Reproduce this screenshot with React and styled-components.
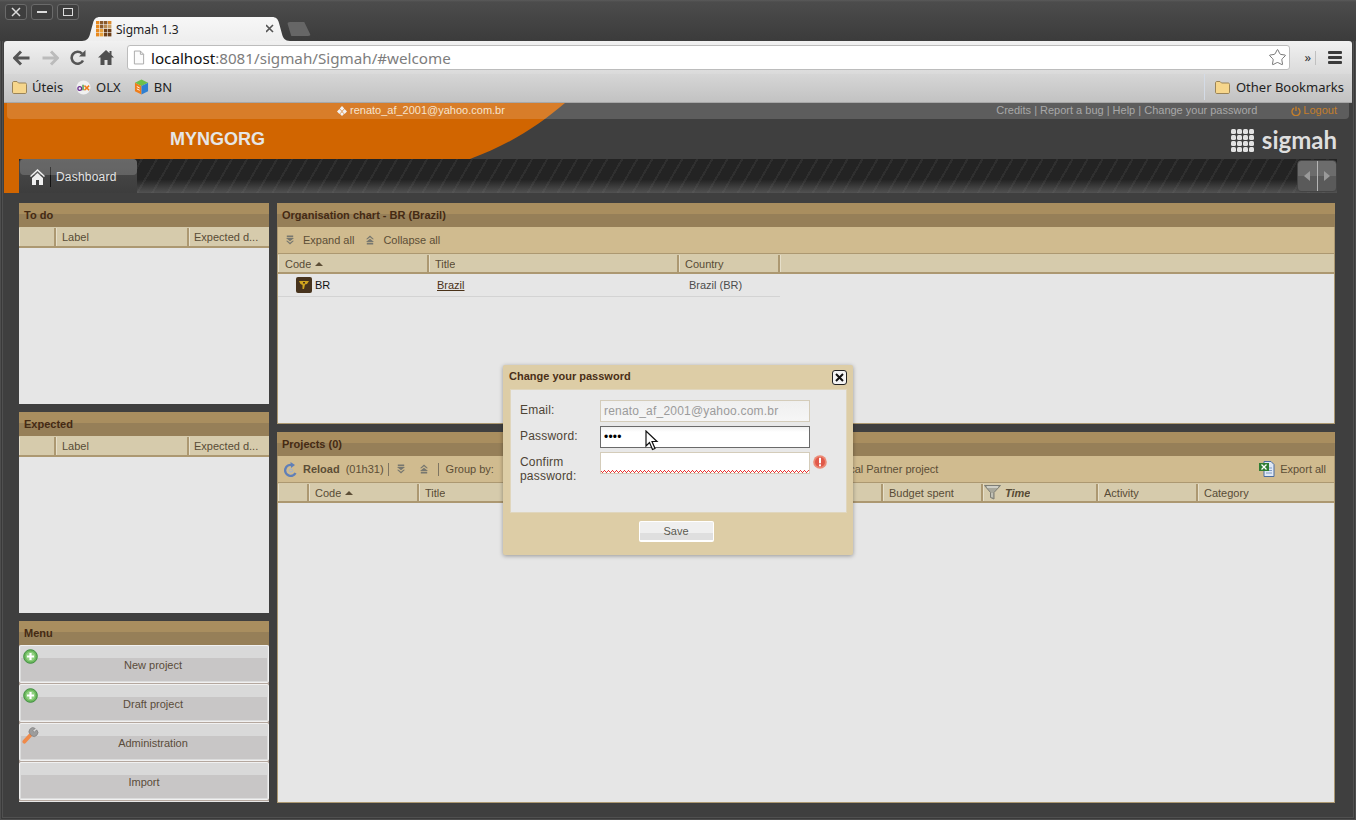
import React from 'react';
import styled, { createGlobalStyle } from 'styled-components';
import { Star } from 'lucide-react';

const GlobalStyle = createGlobalStyle`
  html, body {
    margin: 0;
    padding: 0;
    background: #3f3f3f;
  }
  * {
    box-sizing: border-box;
  }
`;

const Frame = styled.div`
  position: relative;
  width: 1356px;
  height: 820px;
  overflow: hidden;
  padding: 0 4px 4px;
  background: #3f3f3f;
  box-shadow: inset 0 0 0 1px #4e4e4e, inset 0 0 0 2px #3a3a3a, inset 0 0 0 3px #505050;
  font-family: "Liberation Sans", Arial, sans-serif;
  font-size: 11px;
`;

const TitleBar = styled.div`
  position: relative;
  height: 41px;
  margin: 0 -4px;
  padding: 4px 0 0 5px;
  display: flex;
  align-items: flex-start;
  gap: 4px;
  background: linear-gradient(#5a5a5a 0, #4c4c4c 2px, #3b3b3b 100%);
`;

const WinButton = styled.div`
  width: 22px;
  height: 16px;
  display: flex;
  align-items: center;
  justify-content: center;
  border: 1px solid #6a6a6a;
  border-radius: 3px;
  background: #3e3e3e;
`;

const Tab = styled.div`
  position: absolute;
  left: 82px;
  top: 17px;
  width: 208px;
  height: 24px;
  padding: 0 4px 0 14px;
  display: flex;
  align-items: center;
  gap: 4px;
  clip-path: path('M0 24 C5 24 7 21 8 17 L11 6 C12 2 14 0 18 0 L190 0 C194 0 196 2 197 6 L200 17 C201 21 203 24 208 24 Z');
  background: linear-gradient(#f7f7f7, #eeeeee);
  font-family: "Noto Sans", sans-serif;
  font-size: 12px;
  color: #222;
`;

const TabLabel = styled.span`
  flex: 1;
`;

const NewTab = styled.div`
  position: absolute;
  left: 287px;
  top: 22px;
  width: 24px;
  height: 14px;
  background: #666;
  clip-path: polygon(0 0, 72% 0, 100% 100%, 18% 100%);
  border-radius: 3px;
`;

const Toolbar = styled.div`
  height: 33px;
  padding: 0 7px 0 4px;
  display: flex;
  align-items: center;
  background: linear-gradient(#f1f1f1, #dadada);
  border-radius: 3px 3px 0 0;
`;

const NavIcon = styled.div`
  width: 28px;
  height: 28px;
  display: flex;
  align-items: center;
  justify-content: center;
  flex: none;
`;

const Omnibox = styled.div`
  width: 1163px;
  height: 25px;
  flex: none;
  margin-left: 7px;
  padding: 0 2px 0 5px;
  display: flex;
  align-items: center;
  gap: 6px;
  background: #fff;
  border: 1px solid #bcbcbc;
  border-radius: 3px;
  font-family: "Noto Sans", sans-serif;
  font-size: 15.2px;
  color: #7d7d7d;
`;

const Url = styled.div`
  flex: 1;
  white-space: nowrap;
  b {
    font-weight: 400;
    color: #111;
  }
`;

const Chevrons = styled.div`
  width: 26px;
  flex: none;
  padding-right: 4px;
  height: 14px;
  line-height: 12px;
  text-align: right;
  border-right: 1px solid #c0c0c0;
  color: #333;
  font-family: "Noto Sans", sans-serif;
  font-size: 13px;
`;

const MenuBars = styled.div`
  margin-left: 12px;
  width: 14px;
  height: 13px;
  flex: none;
  display: flex;
  flex-direction: column;
  justify-content: space-between;
  span {
    display: block;
    height: 3px;
    background: #3a3a3a;
    border-radius: 1px;
  }
`;

const BookmarksBar = styled.div`
  height: 29px;
  padding: 0 8px 2px;
  display: flex;
  align-items: center;
  background: linear-gradient(#d6d6d6, #c2c2c2);
  border-bottom: 1px solid #a8a8a8;
  font-family: "Noto Sans", sans-serif;
  font-size: 13px;
  color: #222;
`;

const Bookmark = styled.div`
  margin-right: 13px;
  display: flex;
  align-items: center;
  gap: 5px;
  white-space: nowrap;
`;

const OtherBookmarks = styled(Bookmark)`
  height: 100%;
  margin: 0 0 0 auto;
  padding-left: 10px;
  gap: 6px;
  border-left: 1px solid #d4dbe6;
`;

const Page = styled.div`
  position: relative;
  height: 714px;
  background: #3f3f3f;
`;

const HeaderShape = styled.svg`
  position: absolute;
  left: 0;
  top: 0;
  width: 600px;
  height: 90px;
`;

const TopBar = styled.div`
  position: relative;
  height: 16px;
  margin: 0 3px;
  padding: 0 12px 1px 330px;
  display: flex;
  align-items: center;
  background: rgba(255, 255, 255, 0.16);
  border-radius: 0 0 4px 4px;
  color: #a9a9a9;
  line-height: 15px;
`;

const UserEmail = styled.span`
  display: inline-flex;
  align-items: center;
  gap: 3px;
  color: #f6e4cf;
`;

const TopLinks = styled.span`
  margin-left: auto;
  color: #a8a8a8;
`;

const Logout = styled.span`
  margin-left: 34px;
  display: inline-flex;
  align-items: center;
  gap: 2px;
  color: #c47f2c;
`;

const BrandRow = styled.div`
  position: relative;
  height: 40px;
  padding: 0 15px 0 166px;
  display: flex;
  align-items: center;
  justify-content: space-between;
`;

const OrgName = styled.div`
  font-size: 18px;
  font-weight: 700;
  color: #e6e6e6;
`;

const Logo = styled.div`
  display: flex;
  align-items: center;
  gap: 8px;
  padding-top: 2px;
  color: #dedede;
  font-family: "Lato", sans-serif;
  font-size: 24px;
  font-weight: 700;
  line-height: 24px;
`;

const TabStrip = styled.div`
  position: relative;
  height: 34px;
  margin: 0 15px;
  display: flex;
  justify-content: space-between;
  background:
    linear-gradient(transparent 60%, rgba(120, 120, 120, 0.55) 100%),
    repeating-linear-gradient(-60deg, #232323 0 11px, #2f2f2f 11px 13px);
`;

const DashTab = styled.div`
  position: relative;
  width: 118px;
  padding: 1px 0 0 11px;
  display: flex;
  align-items: center;
  background: linear-gradient(#4a4a4a, #3d3d3d);
  border-radius: 4px 4px 0 0;
  color: #e2e2e2;
  font-size: 12px;
  letter-spacing: 0.2px;
  &::before {
    content: '';
    position: absolute;
    left: 1px;
    right: 0;
    top: 0;
    height: 16px;
    background: rgba(255, 255, 255, 0.17);
    border-radius: 4px;
  }
`;

const DashDivider = styled.span`
  width: 1px;
  height: 20px;
  margin: 0 5px 0 5px;
  background: #111;
`;

const StripNav = styled.div`
  width: 40px;
  margin: 1px 0;
  display: flex;
  border-radius: 4px;
  overflow: hidden;
  background: linear-gradient(#6c6c6c 50%, #5a5a5a 50%);
  border: 1px solid #444;
`;

const StripArrow = styled.div`
  flex: 1;
  display: flex;
  align-items: center;
  justify-content: center;
  & + & {
    border-left: 1px solid #b5b5b5;
  }
  i {
    width: 0;
    height: 0;
    border-top: 5px solid transparent;
    border-bottom: 5px solid transparent;
    ${(p) => (p.$right ? 'border-left: 6px solid #9a9a9a;' : 'border-right: 6px solid #9a9a9a;')}
  }
`;

const Dashboard = styled.div`
  position: relative;
  padding: 10px 17px 0 15px;
  display: grid;
  grid-template-columns: 250px 1058px;
  column-gap: 8px;
`;

const Column = styled.div`
  display: flex;
  flex-direction: column;
  gap: 8px;
`;

const Panel = styled.div`
  height: ${(p) => p.$h}px;
  display: flex;
  flex-direction: column;
  background: #e6e6e6;
  ${(p) => p.$framed && 'box-shadow: inset 1px 0 0 #ac9871, inset -1px 0 0 #ac9871, inset 0 -1px 0 #ac9871;'}
`;

const PanelTitle = styled.div`
  height: 24px;
  flex: none;
  padding: 0 5px;
  display: flex;
  align-items: center;
  background: linear-gradient(#a98e5f 46%, #967f58 46%);
  color: #452a13;
  font-weight: 700;
`;

const PanelBar = styled.div`
  height: 26px;
  flex: none;
  margin: 0 1px;
  padding: 0 8px 0 6px;
  display: flex;
  align-items: center;
  background: #d0bb8f;
  color: #5c4e36;
  white-space: nowrap;
`;

const HeadRow = styled.div`
  height: ${(p) => p.$h || 21}px;
  flex: none;
  margin: 0 ${(p) => (p.$inset ? 1 : 0)}px;
  padding-top: ${(p) => (p.$inset ? 1 : 0)}px;
  display: flex;
  background: #d6cbac;
  border-top: 1px solid ${(p) => (p.$inset ? '#ac9871' : '#d6cbac')};
  border-bottom: 2px solid #ac9871;
`;

const HeadCell = styled.div`
  width: ${(p) => p.$w}px;
  flex: ${(p) => (p.$w ? 'none' : '1')};
  padding: 0 ${(p) => p.$pad ?? 6}px;
  display: flex;
  align-items: center;
  gap: 4px;
  min-width: 0;
  border-right: 2px solid #ac9871;
  box-shadow: inset 1px 0 0 #e6dfca;
  color: #584b36;
  font-style: ${(p) => (p.$italic ? 'italic' : 'normal')};
  font-weight: ${(p) => (p.$italic ? 700 : 400)};
  span {
    overflow: hidden;
    text-overflow: ellipsis;
    white-space: nowrap;
  }
  &:last-child {
    border-right: 0;
  }
`;

const SortUp = styled.i`
  width: 0;
  height: 0;
  border-left: 4px solid transparent;
  border-right: 4px solid transparent;
  border-bottom: 4px solid #5c4e36;
`;

const DataRow = styled.div`
  width: 502px;
  height: 23px;
  margin-left: 1px;
  display: flex;
  align-items: center;
  flex: none;
  border-bottom: 1px solid #d3d3d3;
`;

const DataCell = styled.div`
  width: ${(p) => p.$w}px;
  padding-left: ${(p) => p.$pad}px;
  display: flex;
  align-items: center;
  gap: 3px;
  color: ${(p) => p.$color || '#4d4d4d'};
  a {
    color: #4a3218;
    text-decoration: underline;
  }
`;

const BarGap = styled.span`
  display: inline-flex;
  align-items: center;
  margin-left: ${(p) => (p.$auto ? 'auto' : `${p.$l || 0}px`)};
  gap: ${(p) => p.$g || 0}px;
`;

const BarSep = styled.span`
  width: 1px;
  height: 13px;
  margin-left: ${(p) => p.$l}px;
  background: #7f7561;
`;

const MenuButton = styled.div`
  height: 38px;
  margin-bottom: 1px;
  padding-left: ${(p) => (p.$plain ? 0 : 18)}px;
  padding-top: 1px;
  position: relative;
  display: flex;
  align-items: center;
  justify-content: center;
  border: 1px solid #f1f1f1;
  border-radius: 2px;
  background: linear-gradient(#d9d9d9 32%, #c8c6c6 32%);
  box-shadow: inset 0 -1px 0 #dcdcdc, inset 1px 0 0 #dcdcdc, inset -1px 0 0 #dcdcdc;
  color: #5a4c3a;
`;

const MenuIcon = styled.span`
  position: absolute;
  left: ${(p) => p.$l ?? 3}px;
  top: 3px;
  display: flex;
`;

const MenuList = styled.div`
  display: flex;
  flex-direction: column;
  background: #b4a79e;
`;

const Dialog = styled.div`
  position: absolute;
  left: 503px;
  top: 365px;
  width: 350px;
  height: 190px;
  padding: 4px 6px 0 7px;
  background: #ddcda6;
  border-radius: 2px;
  box-shadow: 0 1px 4px rgba(0, 0, 0, 0.35);
`;

const DialogHead = styled.div`
  height: 20px;
  margin-left: -1px;
  display: flex;
  align-items: flex-start;
  justify-content: space-between;
  line-height: 14px;
  color: #4a2f17;
  font-weight: 700;
`;

const CloseBox = styled.div`
  width: 15px;
  height: 15px;
  margin-top: 1px;
  display: flex;
  align-items: center;
  justify-content: center;
  background: #f4f4f4;
  border: 1px solid #222;
  border-radius: 3px;
`;

const DialogBody = styled.div`
  height: 124px;
  padding: 10px 10px 0 9px;
  display: grid;
  grid-template-columns: 80px 210px 20px;
  grid-auto-rows: min-content;
  row-gap: 4px;
  background: #e8e8e8;
  border: 1px solid #e0d6bd;
`;

const FieldLabel = styled.label`
  padding-top: 3px;
  line-height: 14px;
  color: #4e4435;
  font-size: 12px;
  letter-spacing: 0.2px;
`;

const Field = styled.input`
  width: 210px;
  height: 22px;
  padding: 0 3px;
  font-family: "Liberation Sans", Arial, sans-serif;
  font-size: 12px;
  letter-spacing: 0.2px;
  outline: 0;
  border-radius: 0;
  border: 1px solid ${(p) => (p.$focused ? '#6a6a6a' : '#d4ccba')};
  color: ${(p) => (p.$muted ? '#9b9b9b' : '#000')};
  background: ${(p) => (p.$muted ? 'linear-gradient(#efefef, #f6f6f6)' : 'linear-gradient(#f0f0f0, #fff 25%)')};
  ${(p) => p.$invalid && `
    background:
      linear-gradient(135deg, transparent 50%, #e8312f 50%, #e8312f 70%, transparent 70%) 0 100% / 4px 3px repeat-x,
      linear-gradient(45deg, transparent 50%, #e8312f 50%, #e8312f 70%, transparent 70%) 2px 100% / 4px 3px repeat-x,
      #fff;
  `}
`;

const ErrorDot = styled.div`
  margin: 3px 0 0 3px;
`;

const DialogFoot = styled.div`
  height: 42px;
  padding: 8px 5px 0 0;
  display: flex;
  align-items: flex-start;
  justify-content: center;
`;

const SaveButton = styled.div`
  width: 75px;
  height: 21px;
  display: flex;
  align-items: center;
  justify-content: center;
  border: 1px solid #fff;
  border-bottom-width: 2px;
  border-radius: 2px;
  background: linear-gradient(#efefef 62%, #dfdfdf 62%);
  color: #5a5a50;
`;

const Pointer = styled.svg`
  position: absolute;
  left: 645px;
  top: 430px;
`;

const Back = ({ color }) => (
  <svg width="18" height="16" viewBox="0 0 18 16">
    <path d="M8 1.5 1.5 8 8 14.5M2 8h14.5" fill="none" stroke={color} strokeWidth="3" />
  </svg>
);

const Forward = ({ color }) => (
  <svg width="18" height="16" viewBox="0 0 18 16">
    <path d="M10 1.5 16.5 8 10 14.5M16 8H1.5" fill="none" stroke={color} strokeWidth="3" />
  </svg>
);

const Reload = () => (
  <svg width="16" height="16" viewBox="0 0 16 16">
    <path d="M13 10.5A6 6 0 1 1 12 3.6" fill="none" stroke="#555" strokeWidth="2.6" />
    <path d="M9 6.5h6.5V0z" fill="#555" />
  </svg>
);

const Home = () => (
  <svg width="16" height="15" viewBox="0 0 16 15">
    <path d="M8 0 0 7.5h2.5V15h4v-5h3v5h4V7.5H16l-2.5-2.4V1h-2v2.2z" fill="#4f4f4f" />
  </svg>
);

const PageIcon = () => (
  <svg width="12" height="15" viewBox="0 0 13 15">
    <path d="M1.5.5h6.5l3.5 3.5v10.5h-10z" fill="#fbfbfb" stroke="#a5a5a5" />
    <path d="M8 .5V4h3.5" fill="none" stroke="#a5a5a5" />
  </svg>
);

const Folder = () => (
  <svg width="15" height="13" viewBox="0 0 15 13">
    <path d="M.5 2c0-1 .5-1.500 1.500-1.500h3l1.500 1.500H13c1 0 1.500.5 1.500 1.500V11c0 1-.5 1.500-1.500 1.500H2C1 12.500.5 12 .5 11z" fill="#f6d68c" stroke="#9a8458" />
  </svg>
);

const SIGMAH_DOTS = ['#e8891d', '#8a5a2c', '#8a5a2c', '#d98b2e', '#e8891d', '#8a5a2c', '#b98a50', '#c9a26a', '#e8891d', '#e8a13d', '#6e3f18', '#6e3f18', '#e8891d', '#e8a13d', '#6e3f18', '#6e3f18'];

const Favicon = () => (
  <svg width="16" height="16" viewBox="0 0 16 16">
    {SIGMAH_DOTS.map((c, i) => (
      <rect key={i} x={(i % 4) * 4} y={Math.floor(i / 4) * 4} width="3.4" height="3.4" fill={c} />
    ))}
  </svg>
);

const LogoDots = () => (
  <svg width="23" height="23" viewBox="0 0 23 23">
    {Array.from({ length: 16 }).map((_, i) => (
      <rect key={i} x={(i % 4) * 6} y={Math.floor(i / 4) * 6} width="5" height="5" rx="1.500" fill="#e2e2e2" />
    ))}
  </svg>
);

const OlxIcon = () => (
  <svg width="15" height="15" viewBox="0 0 16 16">
    <circle cx="8" cy="8" r="7.500" fill="#f1f1f1" />
    <circle cx="4" cy="9" r="2" fill="none" stroke="#6b2f91" strokeWidth="1.400" />
    <path d="M7.500 5v6" stroke="#3b8f3a" strokeWidth="1.400" />
    <path d="m9 6 5 5m0-5-5 5" stroke="#ef7d1a" strokeWidth="1.600" />
  </svg>
);

const CubeIcon = () => (
  <svg width="15" height="16" viewBox="0 0 16 16">
    <path d="M8 0 15 3.500 8 7 1 3.500z" fill="#6cc04a" />
    <path d="M1 3.500 8 7v9L1 12.500z" fill="#ef7d1a" />
    <path d="M15 3.500 8 7v9l7-3.500z" fill="#2f7fd1" />
    <path d="M3 7.500 6 9M3 10l3 1.500" stroke="#fff" strokeWidth="1" />
  </svg>
);

const HouseWhite = () => (
  <svg width="15" height="16" viewBox="0 0 15 16">
    <path d="M7.500 0 0 7l1 1 6.500-6 6.500 6 1-1z" fill="#efefef" />
    <path d="M2 9l5.500-5L13 9v7H9v-5H6v5H2z" fill="#efefef" />
  </svg>
);

const Expand = () => (
  <svg width="8" height="10" viewBox="0 0 10 11">
    <path d="M1 0h8v2H1zM0 3h10L5 7zM0 6.500 5 11l5-4.500H8L5 9 2 6.500z" fill="#77776f" />
  </svg>
);

const Collapse = () => (
  <svg width="8" height="10" viewBox="0 0 10 11">
    <path d="M1 11h8V9H1zM0 8h10L5 4zM0 4.500 5 0l5 4.500H8L5 2 2 4.500z" fill="#77776f" />
  </svg>
);

const PlusBadge = () => (
  <svg width="15" height="15" viewBox="0 0 15 15">
    <circle cx="7.500" cy="7.500" r="6.800" fill="#6cb85c" stroke="#3f8f3f" />
    <circle cx="7.500" cy="7.500" r="4.800" fill="#8fd080" />
    <path d="M7.500 4v7M4 7.500h7" stroke="#fff" strokeWidth="2.200" />
  </svg>
);

const Wrench = () => (
  <svg width="17" height="17" viewBox="0 0 18 18">
    <path d="M2.500 15.500 9 8.500" stroke="#ef8a4a" strokeWidth="4" strokeLinecap="round" />
    <path d="M9 8a4 4 0 0 1 5-6.500L11.500 4l1.500 1.500L15.500 3A4 4 0 0 1 10 9z" fill="#9c9c9c" stroke="#777" strokeWidth=".6" />
  </svg>
);

const BrandBadge = () => (
  <svg width="16" height="16" viewBox="0 0 16 16">
    <rect width="16" height="16" rx="2" fill="#47331d" />
    <path d="M3 4h10L11 7 9 7.500 8 12H6.500L6.500 8 4.500 7z" fill="#d0a41e" />
    <rect x="7" y="5" width="2" height="1.500" fill="#47331d" />
  </svg>
);

const ReloadBlue = () => (
  <svg width="14" height="15" viewBox="0 0 14 15">
    <path d="M11.500 11A5.500 5.500 0 1 1 8 3" fill="none" stroke="#5f7fb8" strokeWidth="2.400" />
    <path d="M6.500 0 11 3 7 6z" fill="#5f7fb8" />
    <circle cx="7" cy="8.500" r="1.600" fill="none" stroke="#9db2d6" />
  </svg>
);

const Excel = () => (
  <svg width="16" height="16" viewBox="0 0 16 16">
    <path d="M5 .5h7l3 3v12H5z" fill="#dfe8f4" stroke="#4a6da0" />
    <path d="M7 7h6M7 9.500h6M7 12h6" stroke="#7f9cc6" />
    <rect x="0" y="2" width="10" height="8" fill="#2f7d32" />
    <path d="m2.500 3.500 5 5m0-5-5 5" stroke="#fff" strokeWidth="1.300" />
  </svg>
);

const Funnel = () => (
  <svg width="17" height="15" viewBox="0 0 17 15">
    <path d="M.5.500h16L10 7.500V14l-3.500-1.500v-5z" fill="#a9a89c" stroke="#7d7d75" />
    <path d="M3 2h11" stroke="#f5f5f0" />
    <path d="M8 8v4" stroke="#d8d8cf" />
  </svg>
);

const ErrorIcon = () => (
  <svg width="14" height="14" viewBox="0 0 14 14">
    <circle cx="7" cy="7" r="6.800" fill="#ec8a75" />
    <circle cx="7" cy="7" r="5" fill="#e0594a" />
    <rect x="6" y="2.800" width="2" height="5.500" fill="#fff" />
    <rect x="6" y="9.300" width="2" height="2" fill="#fff" />
  </svg>
);

const PowerIcon = () => (
  <svg width="10" height="10" viewBox="0 0 10 10">
    <path d="M3 2.200a4 4 0 1 0 4 0M5 .5v4.500" fill="none" stroke="#c47f2c" strokeWidth="1.400" />
  </svg>
);

const Diamonds = () => (
  <svg width="10" height="10" viewBox="0 0 10 10">
    <path d="M5 0l2.300 2.500L5 5 2.700 2.500zM2.400 3 4.700 5.400 2.400 8 0 5.400zM7.600 3 10 5.400 7.600 8 5.300 5.400zM5 6l2 2.100L5 10 3 8.100z" fill="#f2f2f2" />
  </svg>
);

const App = () => (
  <>
    <GlobalStyle />
    <Frame>
      <TitleBar>
        <WinButton>
          <svg width="10" height="10" viewBox="0 0 10 10">
            <path d="m1 1 8 8m0-8-8 8" stroke="#dcdcdc" strokeWidth="1.500" />
          </svg>
        </WinButton>
        <WinButton>
          <svg width="10" height="4" viewBox="0 0 10 4">
            <path d="M0 2h10" stroke="#dcdcdc" strokeWidth="2" />
          </svg>
        </WinButton>
        <WinButton>
          <svg width="10" height="8" viewBox="0 0 10 8">
            <rect x=".5" y=".5" width="9" height="7" fill="none" stroke="#dcdcdc" />
          </svg>
        </WinButton>
        <Tab>
          <Favicon />
          <TabLabel>Sigmah 1.3</TabLabel>
          <svg width="20" height="10" viewBox="0 0 20 10">
            <path d="m0 1 7 7m0-7-7 7" stroke="#555" strokeWidth="1.600" />
          </svg>
        </Tab>
        <NewTab />
      </TitleBar>

      <Toolbar>
        <NavIcon><Back color="#555" /></NavIcon>
        <NavIcon><Forward color="#bbb" /></NavIcon>
        <NavIcon><Reload /></NavIcon>
        <NavIcon><Home /></NavIcon>
        <Omnibox>
          <PageIcon />
          <Url><b>localhost</b>:8081/sigmah/Sigmah/#welcome</Url>
          <Star size={19} strokeWidth={1} color="#555" />
        </Omnibox>
        <Chevrons>»</Chevrons>
        <MenuBars><span /><span /><span /></MenuBars>
      </Toolbar>

      <BookmarksBar>
        <Bookmark><Folder />Úteis</Bookmark>
        <Bookmark><OlxIcon />OLX</Bookmark>
        <Bookmark><CubeIcon />BN</Bookmark>
        <OtherBookmarks><Folder />Other Bookmarks</OtherBookmarks>
      </BookmarksBar>

      <Page>
        <HeaderShape viewBox="0 0 600 90">
          <path d="M0 0H561C535 22 505 42 466 56H15V90H0Z" fill="#d16500" />
        </HeaderShape>

        <TopBar>
          <UserEmail><Diamonds />renato_af_2001@yahoo.com.br</UserEmail>
          <TopLinks>Credits | Report a bug | Help | Change your password</TopLinks>
          <Logout><PowerIcon />Logout</Logout>
        </TopBar>

        <BrandRow>
          <OrgName>MYNGORG</OrgName>
          <Logo><LogoDots />sigmah</Logo>
        </BrandRow>

        <TabStrip>
          <DashTab>
            <HouseWhite />
            <DashDivider />
            Dashboard
          </DashTab>
          <StripNav>
            <StripArrow><i /></StripArrow>
            <StripArrow $right><i /></StripArrow>
          </StripNav>
        </TabStrip>

        <Dashboard>
          <Column>
            <Panel $h={201}>
              <PanelTitle>To do</PanelTitle>
              <HeadRow>
                <HeadCell $w={37} />
                <HeadCell $w={133} $pad={6}><span>Label</span></HeadCell>
                <HeadCell $pad={5}><span>Expected d...</span></HeadCell>
              </HeadRow>
            </Panel>
            <Panel $h={201}>
              <PanelTitle>Expected</PanelTitle>
              <HeadRow>
                <HeadCell $w={37} />
                <HeadCell $w={133} $pad={6}><span>Label</span></HeadCell>
                <HeadCell $pad={5}><span>Expected d...</span></HeadCell>
              </HeadRow>
            </Panel>
            <Panel $h={181}>
              <PanelTitle>Menu</PanelTitle>
              <MenuList>
                <MenuButton><MenuIcon><PlusBadge /></MenuIcon>New project</MenuButton>
                <MenuButton><MenuIcon><PlusBadge /></MenuIcon>Draft project</MenuButton>
                <MenuButton><MenuIcon $l={2}><Wrench /></MenuIcon>Administration</MenuButton>
                <MenuButton $plain>Import</MenuButton>
              </MenuList>
            </Panel>
          </Column>

          <Column>
            <Panel $h={221} $framed>
              <PanelTitle>Organisation chart - BR (Brazil)</PanelTitle>
              <PanelBar>
                <BarGap $l={2} $g={9}><Expand />Expand all</BarGap>
                <BarGap $l={12} $g={9}><Collapse />Collapse all</BarGap>
              </PanelBar>
              <HeadRow $inset>
                <HeadCell $w={151} $pad={7}><span>Code</span><SortUp /></HeadCell>
                <HeadCell $w={250}><span>Title</span></HeadCell>
                <HeadCell $w={101}><span>Country</span></HeadCell>
                <HeadCell />
              </HeadRow>
              <DataRow>
                <DataCell $w={151} $pad={18} $color="#111"><BrandBadge />BR</DataCell>
                <DataCell $w={252} $pad={8}><a>Brazil</a></DataCell>
                <DataCell $w={99} $pad={8}>Brazil (BR)</DataCell>
              </DataRow>
            </Panel>
            <Panel $h={371} $framed>
              <PanelTitle>Projects (0)</PanelTitle>
              <PanelBar>
                <ReloadBlue />
                <BarGap $l={5}><b>Reload</b></BarGap>
                <BarGap $l={6}>(01h31)</BarGap>
                <BarSep $l={4} />
                <BarGap $l={8}><Expand /></BarGap>
                <BarGap $l={15}><Collapse /></BarGap>
                <BarSep $l={10} />
                <BarGap $l={7}>Group by:</BarGap>
                <BarGap $l={343}>Local Partner project</BarGap>
                <BarGap $auto $g={5}><Excel />Export all</BarGap>
              </PanelBar>
              <HeadRow $inset>
                <HeadCell $w={31} />
                <HeadCell $w={110}><span>Code</span><SortUp /></HeadCell>
                <HeadCell $w={464}><span>Title</span></HeadCell>
                <HeadCell $w={100}><span>Budget spent</span></HeadCell>
                <HeadCell $w={115} $pad={1} $italic><Funnel /><span>Time</span></HeadCell>
                <HeadCell $w={100}><span>Activity</span></HeadCell>
                <HeadCell><span>Category</span></HeadCell>
              </HeadRow>
            </Panel>
          </Column>
        </Dashboard>
      </Page>

      <Dialog>
        <DialogHead>
          Change your password
          <CloseBox>
            <svg width="9" height="9" viewBox="0 0 9 9">
              <path d="m1 1 7 7m0-7-7 7" stroke="#111" strokeWidth="2" />
            </svg>
          </CloseBox>
        </DialogHead>
        <DialogBody>
          <FieldLabel>Email:</FieldLabel>
          <Field $muted readOnly value="renato_af_2001@yahoo.com.br" />
          <span />
          <FieldLabel>Password:</FieldLabel>
          <Field $focused readOnly type="password" value="1234" />
          <span />
          <FieldLabel>Confirm password:</FieldLabel>
          <Field $invalid readOnly value="" />
          <ErrorDot><ErrorIcon /></ErrorDot>
        </DialogBody>
        <DialogFoot>
          <SaveButton>Save</SaveButton>
        </DialogFoot>
      </Dialog>

      <Pointer width="14" height="21" viewBox="0 0 14 21">
        <path d="M1 1v15l3.500-3.500 3 7 2.500-1-3-7h5z" fill="#fff" stroke="#111" strokeWidth="1.200" />
      </Pointer>
    </Frame>
  </>
);

export default App;
